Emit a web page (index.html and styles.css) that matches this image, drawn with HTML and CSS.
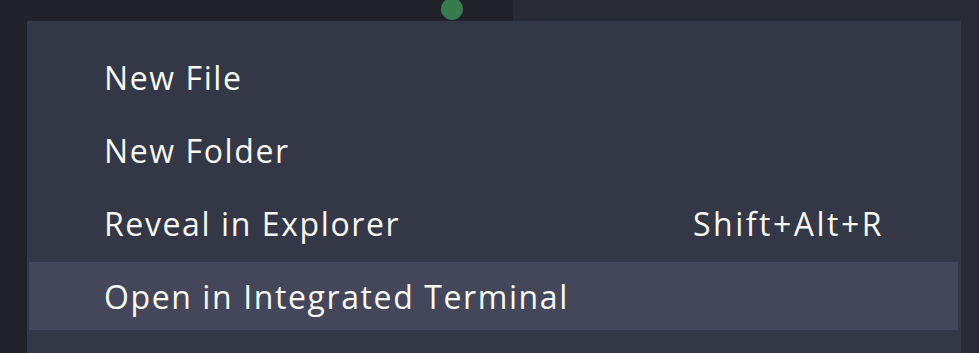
FILE: index.html
```html
<!DOCTYPE html>
<html>
<head>
<meta charset="utf-8">
<link rel="stylesheet" href="styles.css">
</head>
<body>
<div class="top">
  <div class="sidebar-top"><span class="dot"></span></div>
  <div class="editor-top"></div>
</div>
<div class="main">
  <div class="gutter"></div>
  <div class="menu">
    <div class="item"><span class="label">New File</span></div>
    <div class="item"><span class="label">New Folder</span></div>
    <div class="item"><span class="label">Reveal in Explorer</span><span class="key">Shift+Alt+R</span></div>
    <div class="item active"><span class="label">Open in Integrated Terminal</span></div>
  </div>
  <div class="right-edge"></div>
</div>
</body>
</html>
```
FILE: styles.css
```css
html, body {
  margin: 0;
  padding: 0;
  width: 979px;
  height: 353px;
  overflow: hidden;
  background: #21222c;
  font-family: "Open Sans", "Noto Sans", sans-serif;
}
.top {
  display: flex;
  height: 21px;
}
.sidebar-top {
  width: 513px;
  background: #21222c;
  position: relative;
}
.dot {
  position: absolute;
  left: 441px;
  top: -2px;
  width: 22px;
  height: 22px;
  border-radius: 50%;
  background: #367a4e;
}
.editor-top {
  flex: 1;
  background: #282a36;
}
.main {
  display: flex;
  height: 332px;
}
.gutter {
  width: 27px;
  background: #21222c;
}
.menu {
  width: 934px;
  background: #343746;
  padding-top: 22px;
  box-sizing: border-box;
}
.right-edge {
  flex: 1;
  background: #282a36;
}
.item {
  display: flex;
  align-items: center;
  justify-content: space-between;
  height: 68px;
  margin: 0 3px 5px 2px;
  padding: 0 76px 0 75px;
  color: #f8f8f2;
  font-size: 32px;
  letter-spacing: 1.6px;
}
.key {
  letter-spacing: 2.5px;
  margin-right: -2px;
}
.item.active {
  background: #44475a;
}
```
